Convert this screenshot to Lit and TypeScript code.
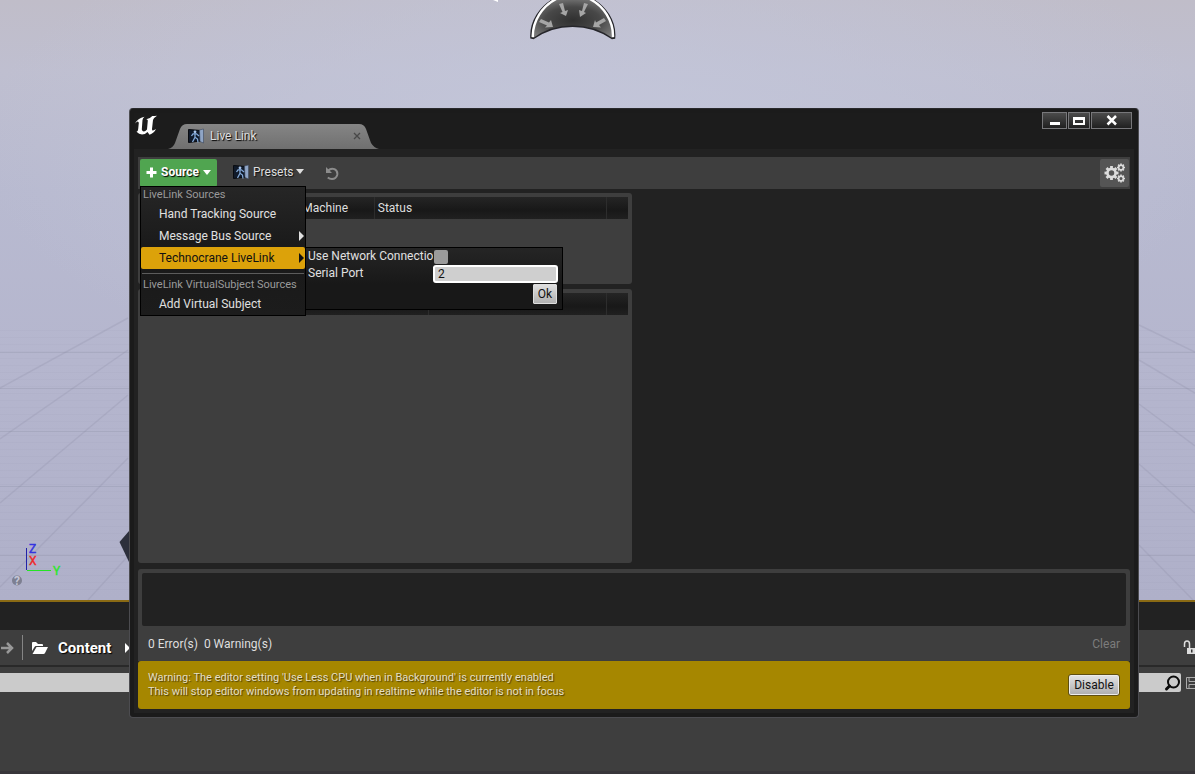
import { LitElement, html, css, svg } from "lit";
import { customElement, property } from "lit/decorators.js";

const captureIcon = html`<svg width="16" height="16" viewBox="0 0 16 16" aria-hidden="true">
  <path d="M.5 1.500 13 2.500V13L.5 14.500z" fill="#101a2a" stroke="#080b10" />
  <path d="M11.500 2 15.500 1v14L12 13.500z" fill="#8fa5c6" stroke="#3c485c" stroke-width=".6" />
  <circle cx="7" cy="3.800" r="1.400" fill="#a9c6ec" />
  <path d="M7 5v4.500M3.500 8 5 5.800 8.500 5.800 11 8M7 9.200 4.500 14M7 9.200 9.500 11 10 14.500" fill="none" stroke="#83a9d8" stroke-width="1.300" />
</svg>`;

@customElement("scene-viewport")
class SceneViewport extends LitElement {
  static styles = css`
    :host {
      display: block;
      position: relative;
      overflow: hidden;
      background:
        radial-gradient(ellipse 620px 260px at 50% 24%, #c3c6da 0, #c3c6da00 100%),
        linear-gradient(#c0bdc9 0, #bfbfd0 12%, #b8bad0 32%, #b5b6ce 60%, #afb0c9 100%);
    }
    .grid { position: absolute; inset: 0; width: 100%; height: 100%; }
    .sun { position: absolute; left: 529px; top: 0; }
    .axes { position: absolute; left: 8px; bottom: 10px; font: 12px Roboto, sans-serif; }
  `;

  render() {
    const rows = [352, 388, 431, 486, 555];
    const fine = Array.from({ length: 38 }, (_, i) => 330 + i * 7);
    const rays = [
      [0, 439, 128, 350], [0, 503, 128, 395], [0, 587, 128, 458], [88, 600, 128, 556], [0, 388, 128, 318],
      [1139, 360, 1195, 393], [1139, 404, 1195, 446], [1139, 464, 1195, 513], [1139, 545, 1193, 600], [1139, 325, 1195, 352],
    ];
    return html`
      <svg class="grid" viewBox="0 0 1195 600" preserveAspectRatio="none" aria-hidden="true">
        ${fine.map((y) => svg`<path d="M0 ${y}.5H1195" stroke="#8e91a5" stroke-opacity=".07" />`)}
        ${rows.map((y) => svg`<path d="M0 ${y}.5H1195" stroke="#85889c" stroke-opacity=".25" />`)}
        ${rays.map(([a, b, c, d]) => svg`<path d="M${a} ${b}L${c} ${d}" stroke="#80839a" stroke-width="1.500" stroke-opacity=".2" />`)}
        <path d="M493 0h5v2z" fill="#fff" />
        <path d="M129 531 119.500 542 129 562z" fill="#2c2f3b" />
      </svg>
      <svg class="sun" width="88" height="42" viewBox="0 0 88 42" aria-hidden="true">
        <defs><radialGradient id="dome" cx=".5" cy=".55" r=".6"><stop offset="0" stop-color="#303030" /><stop offset=".55" stop-color="#484848" /><stop offset="1" stop-color="#808080" /></radialGradient></defs>
        <path d="M2 38C1 22 11 6 27-2H61C77 6 87 22 85.500 38L83 38.500C60 22 27 22 4.500 38.500Z" fill="url(#dome)" stroke="#26262b" stroke-width="1.500" />
        <path d="M3.800 37C3.500 21 13 6 28-1.500M84 37C84.500 21 75 6 60-1.500" fill="none" stroke="#fff" stroke-width="2.400" />
        <g fill="#a5a5a5">
          <path d="M30 4 34 3 36 11 39 10 37 16 31 13 33.500 12z" />
          <path d="M59 4 55 3 53 11 50 10 51 17 57 13 55 12z" />
          <path d="M12 19 20 22.500 22 20 24 27 16 27.500 18 25.500 10 22z" />
          <path d="M75 18 67 22.500 66 20 64 27 72 27.500 70 25 77 21z" />
        </g>
      </svg>
      <svg class="axes" width="60" height="52" viewBox="0 0 60 52" aria-hidden="true">
        <path d="M18.500 10V32" stroke="#2222a8" />
        <path d="M19 32.500H43" stroke="#25e325" />
        <text x="21" y="15" fill="#3434e0" stroke="#3434e0" stroke-width=".4">Z</text>
        <text x="21" y="27" fill="#ee2828" stroke="#ee2828" stroke-width=".4">X</text>
        <text x="45" y="37" fill="#2be62b" stroke="#2be62b" stroke-width=".4">Y</text>
        <circle cx="9" cy="42.500" r="5" fill="#7d7f91" />
        <text x="6" y="47" fill="#c4c5d5" font-weight="700">?</text>
      </svg>
    `;
  }
}

@customElement("content-browser")
class ContentBrowser extends LitElement {
  static styles = css`
    :host {
      display: block;
      background: #3e3e3e;
      border-top: 2px solid #8a6a14;
      box-shadow: inset 0 -3px #38363a;
      min-height: 172px;
      color: #fff;
      font: 700 15px/20px Roboto, sans-serif;
    }
    .strip { height: 28px; background: #222; }
    .path { display: flex; align-items: center; height: 35px; border-bottom: 2px solid #292929; }
    .history { width: 23px; height: 25px; padding: 0; border: 0; border-right: 1px solid #858585; background: none; text-align: left; }
    .history svg { display: block; }
    .crumb { display: flex; align-items: center; gap: 10px; margin-left: 8px; color: #fff; text-decoration: none; text-shadow: 1px 1px 1px #000; }
    .next { margin-left: 14px; }
    .lock { margin-left: auto; }
    .filter { display: flex; align-items: center; margin-top: 6px; }
    .box { position: relative; display: flex; flex: 1; align-items: center; height: 19px; background: #cbcbcb; border-radius: 0 2px 2px 0; }
    .box input { flex: 1; min-width: 0; height: 19px; box-sizing: border-box; border: 0; padding: 0 4px; background: none; font: inherit; outline: 0; }
    .save { margin-left: 5px; width: 9px; overflow: hidden; }
  `;

  render() {
    return html`
      <div class="strip"></div>
      <div class="path">
        <button class="history" aria-label="Forward"><svg width="14" height="25" viewBox="0 0 14 25"><path d="M1 13h9M7 8l5 5-5 5" fill="none" stroke="#999" stroke-width="2.500" /></svg></button>
        <a class="crumb" href="#content">
          <svg width="17" height="14" viewBox="0 0 17 14" aria-hidden="true"><path d="M1 9V2Q1 1 2 1H5L7 3H11Q12 3 12 4V5H5Q4 5 3.500 6L1 10ZM5.500 6H17L14 12Q13.500 13 12.500 13H1.500Z" fill="#fff" /></svg>
          Content
        </a>
        <svg class="next" width="5" height="10" viewBox="0 0 5 10" aria-hidden="true"><path d="M0 0 5 5 0 10z" fill="#fff" /></svg>
        <svg class="lock" width="12" height="16" viewBox="0 0 12 16" aria-hidden="true"><path d="M1.500 7V4Q1.500 1 4 1T6.500 4V8" fill="none" stroke="#ddd" stroke-width="1.500" /><path d="M4 8H12V14H4z" fill="#ddd" /><path d="M8 9.500h1.500V12.500H8z" fill="#333" /></svg>
      </div>
      <div class="filter">
        <div class="box">
          <input type="text" aria-label="Search assets" />
          <svg width="17" height="18" viewBox="0 0 17 18" aria-hidden="true"><circle cx="9.500" cy="8" r="5.500" fill="none" stroke="#0b0b0b" stroke-width="2" /><path d="M5.500 12 2.500 15" stroke="#0b0b0b" stroke-width="3" stroke-linecap="round" /></svg>
        </div>
        <svg class="save" width="9" height="12" viewBox="0 0 9 12" aria-hidden="true"><path d="M.5.5H11.500V11.500H.5ZM3 1V4.500H9M3 11V7.500H9" fill="none" stroke="#aaa" /></svg>
      </div>
    `;
  }
}

@customElement("source-form")
class SourceForm extends LitElement {
  static styles = css`
    form {
      display: grid;
      grid-template-columns: 125px 125px;
      grid-template-rows: 17px 19px 20px;
      padding: 0 4px 5px 2px;
      border: 1px solid #000;
      background: linear-gradient(#252525, #181818 60%);
      color: #e0e0e0;
      font: 12px/16px Roboto, sans-serif;
    }
    label { overflow: hidden; white-space: nowrap; }
    .check { appearance: none; width: 14px; height: 14px; margin: 2px 1px 0; border-radius: 2px; background: #9b9b9b; }
    .port { box-sizing: border-box; width: 125px; height: 18px; margin: 0; padding: 0 3px; border: 2px solid #fff; border-radius: 3px; background: #cfcfcf; color: #111; font: inherit; outline: 0; }
    .ok { grid-column: 2; justify-self: end; box-sizing: border-box; width: 24px; height: 20px; margin: 0 1px; padding: 0; border: 1px solid #ddd; border-radius: 1px; background: linear-gradient(#dedede, #b0b0b0); color: #111; font: inherit; }
  `;

  render() {
    return html`<form @submit=${(e: Event) => e.preventDefault()}>
      <label for="network">Use Network Connection</label><input class="check" id="network" type="checkbox" />
      <label for="port">Serial Port</label><input class="port" id="port" type="text" value="2" />
      <button class="ok">Ok</button>
    </form>`;
  }
}

@customElement("source-menu")
class SourceMenu extends LitElement {
  static styles = css`
    .menu {
      box-sizing: border-box;
      width: 166px;
      border: 1px solid #000;
      background: linear-gradient(#262626, #191919 50%, #1c1c1c);
      color: #e0e0e0;
      font: 12px/22px Roboto, sans-serif;
    }
    .heading { height: 16px; padding-left: 2px; color: #9a9a9a; font-size: 11px; line-height: 16px; white-space: nowrap; }
    .item { display: flex; align-items: center; justify-content: space-between; width: 100%; height: 22px; padding: 0 1px 0 18px; border: 0; border-radius: 2px; background: none; color: inherit; font: inherit; text-align: left; }
    .active { background: #dca20a; color: #111; }
    .row { position: relative; }
    .rule { height: 1px; margin: 4px 1px 3px; border: 0; background: #5c5c5c; }
    source-form { position: absolute; left: 100%; top: 0; }
  `;

  item(label: string, sub = false, active = false) {
    return html`<button role="menuitem" class="item ${active ? "active" : ""}">
      ${label}${sub ? html`<svg width="5" height="10" viewBox="0 0 5 10" aria-hidden="true"><path d="M0 0 5 5 0 10z" fill="currentColor" /></svg>` : ""}
    </button>`;
  }

  render() {
    return html`<div class="menu" role="menu">
      <div class="heading">LiveLink Sources</div>
      ${this.item("Hand Tracking Source")} ${this.item("Message Bus Source", true)}
      <div class="row">${this.item("Technocrane LiveLink", true, true)}<source-form></source-form></div>
      <hr class="rule" />
      <div class="heading">LiveLink VirtualSubject Sources</div>
      ${this.item("Add Virtual Subject")}
    </div>`;
  }
}

@customElement("data-panel")
class DataPanel extends LitElement {
  @property({ attribute: false }) columns: { title: string; width: number }[] = [];

  static styles = css`
    :host { display: block; box-sizing: border-box; padding: 4px; border-radius: 3px; background: #3e3e3e; color: #dedede; font: 12px/22px Roboto, sans-serif; overflow: hidden; }
    table { width: 100%; border-collapse: collapse; table-layout: fixed; background: linear-gradient(#252525, #181818 60%, #202020); }
    th { height: 22px; padding: 0 3px; border-right: 1px solid #2d2d2d; font-weight: 400; text-align: left; white-space: nowrap; }
    th:last-child { border-right: 0; }
  `;

  render() {
    return html`<table>
      <colgroup>${this.columns.map((c) => html`<col style="width:${c.width}%" />`)}</colgroup>
      <thead><tr>${this.columns.map((c) => html`<th scope="col">${c.title}</th>`)}</tr></thead>
    </table>`;
  }
}

@customElement("live-link-window")
class LiveLinkWindow extends LitElement {
  static styles = css`
    :host {
      box-sizing: border-box;
      display: flex;
      flex-direction: column;
      padding: 0 8px 8px;
      border: 1px solid #4c4c50;
      border-top-color: #29292c;
      border-radius: 4px;
      background: linear-gradient(#1c1c1c, #1c1c1c 40px, #222 40px);
      box-shadow: inset 0 0 0 4px #1b1b1b;
      color: #dedede;
      font: 12px/16px Roboto, sans-serif;
    }
    button { font: inherit; color: inherit; }
    .title { display: flex; align-items: flex-start; height: 40px; margin: 0 -3px 8px; }
    .logo { margin-top: 6px; }
    .tab { position: relative; box-sizing: border-box; display: flex; align-items: center; width: 211px; height: 25px; margin: 15px 0 0 9px; padding-bottom: 2px; isolation: isolate; text-shadow: 1px 1px 1px #000; }
    .shape { position: absolute; inset: 0; z-index: -1; }
    .tab-icon { display: flex; margin: 0 6px 0 20px; }
    .tab-name { flex: 1; }
    .tab-close { width: 12px; height: 12px; margin-right: 16px; padding: 0; border: 0; background: none; }
    .tab-close svg, .controls svg { display: block; margin: auto; }
    .controls { display: flex; gap: 1px; margin: 3px 1px 0 auto; }
    .controls button { box-sizing: border-box; height: 17px; width: 25px; padding: 0; border: 1px solid #77777a; background: linear-gradient(#4b4b4b, #202020); }
    .controls .maximise { width: 22px; }
    .controls .close { width: 41px; }
    .toolbar { display: flex; align-items: center; height: 32px; margin-bottom: 4px; padding: 0 1px 0 2px; background: #3e3e3e; }
    .anchor { position: relative; align-self: flex-end; z-index: 2; }
    .source { display: flex; align-items: center; gap: 4px; width: 77px; height: 28px; margin-bottom: 2px; padding: 0 6px 2px; border: 0; border-radius: 2px; background: #50a550; color: #fff; font-weight: 700; text-shadow: 1px 1px 1px #000; }
    source-menu { position: absolute; left: 0; top: 27px; }
    .flat { display: flex; align-items: center; padding: 0; border: 0; background: none; }
    .presets { gap: 2px; margin-left: 16px; padding-bottom: 3px; text-shadow: 1px 1px 1px #111; }
    .presets span { margin-left: 2px; }
    .undo { margin-left: 21px; }
    .options { display: grid; place-items: center; width: 29px; height: 28px; margin-left: auto; padding: 0; border: 0; border-radius: 2px; background: #555; }
    .body { display: grid; grid-template-columns: 1fr 1fr; gap: 4px; flex: 1; min-height: 0; }
    .lists { display: grid; grid-template-rows: minmax(0, 1fr) minmax(0, 3fr); gap: 5px; }
    .log { margin-top: 6px; padding: 4px 4px 0; border-radius: 3px 3px 0 0; background: #3e3e3e; }
    .output { height: 53px; border-radius: 2px; background: #222; }
    .status { display: flex; align-items: center; height: 35px; padding: 0 6px; }
    .clear { margin-left: auto; color: #7c7c7c; }
    .warning { display: flex; align-items: center; justify-content: space-between; height: 48px; padding: 0 10px; border-radius: 3px; background: #a68700; color: #e6dfc4; font-size: 11px; line-height: 14px; text-shadow: 1px 1px 1px #4c3f08; }
    .warning p { margin: 0; }
    .disable { box-sizing: border-box; width: 52px; height: 22px; padding: 0; border: 1px solid #5f4e10; border-radius: 3px; background: linear-gradient(#e4e4e4, #adadad); box-shadow: inset 0 0 0 1px #ececec; color: #111; font-size: 12px; text-shadow: none; }
  `;

  gear(cx: number, cy: number, r: number) {
    const teeth = Array.from({ length: 8 }, (_, i) => i * 45);
    return svg`<g transform="translate(${cx} ${cy})">
      ${teeth.map((a) => svg`<rect x=${-r * 0.2} y=${-r} width=${r * 0.4} height=${r * 0.5} transform="rotate(${a})" fill="#dcdcdc" />`)}
      <circle r=${r * 0.58} fill="none" stroke="#dcdcdc" stroke-width=${r * 0.38} />
    </g>`;
  }

  render() {
    const caret = html`<svg width="8" height="5" viewBox="0 0 8 5" aria-hidden="true"><path d="M0 0H8L4 5z" fill="currentColor" /></svg>`;
    return html`
      <header class="title">
        <svg class="logo" width="24" height="22" viewBox="0 0 24 22" aria-hidden="true">
          <path d="M0 8.500Q2.500 3.500 9.500 1.800 7.800 3 7.500 5L6.800 14.500Q7.300 16.500 8.800 16.500 10.300 16.300 12 14.500L12.800 5.500Q12.800 4.500 11.300 4.200 15.300 3.500 17.300 1 19.300 1 22 .8 18.500 3 18 5L17 14Q17 15.700 18 15.500 19 15.300 21 14 19 18.200 14.500 19.800L12.500 17Q10 19.500 7 19.500 4 19.300 1.500 16.800 3 16.500 3.200 14L3.800 8Q3.800 6.500 2.500 6.500 1.500 6.800 0 8.500Z" fill="#fff" />
        </svg>
        <div class="tab">
          <svg class="shape" width="211" height="25" viewBox="0 0 211 25" aria-hidden="true">
            <defs><linearGradient id="face" x2="0" y2="1"><stop offset="0" stop-color="#858585" /><stop offset="1" stop-color="#707070" /></linearGradient></defs>
            <path d="M0 25Q5 24 7 19L12 5Q14 0 19 0H191Q196 0 198 5L203 19Q206 24 211 25Z" fill="url(#face)" />
          </svg>
          <span class="tab-icon">${captureIcon}</span>
          <span class="tab-name">Live Link</span>
          <button class="tab-close" aria-label="Close tab"><svg width="8" height="8" viewBox="0 0 8 8"><path d="M1 1 7 7M7 1 1 7" stroke="#484848" stroke-width="1.300" /></svg></button>
        </div>
        <div class="controls">
          <button aria-label="Minimise"><svg width="12" height="12" viewBox="0 0 12 12"><path d="M1 7H11V10H1z" fill="#fff" /></svg></button>
          <button class="maximise" aria-label="Maximise"><svg width="12" height="10" viewBox="0 0 12 10"><path d="M0 1H12V9H0ZM2 4V7H10V4Z" fill="#fff" fill-rule="evenodd" /></svg></button>
          <button class="close" aria-label="Close"><svg width="12" height="11" viewBox="0 0 12 11"><path d="M1.500 1 10 9.500M10 1 1.500 9.500" stroke="#fff" stroke-width="2.500" /></svg></button>
        </div>
      </header>
      <div class="toolbar">
        <div class="anchor">
          <button class="source">
            <svg width="11" height="11" viewBox="0 0 11 11" aria-hidden="true"><path d="M4 0.500H7V4H10.500V7H7V10.500H4V7H.5V4H4z" fill="#fff" /></svg>
            Source ${caret}
          </button>
          <source-menu></source-menu>
        </div>
        <button class="flat presets">${captureIcon}<span>Presets</span>${caret}</button>
        <button class="flat undo" aria-label="Undo"><svg width="14" height="15" viewBox="0 0 14 15"><path d="M3 4.800Q6 1.700 9.500 3.200 13 5 12.200 9 11 13 7 13 4.500 13 2.800 11.500" fill="none" stroke="#8c8c8c" stroke-width="2" /><path d="M1 1V7H7z" fill="#8c8c8c" /></svg></button>
        <button class="options" aria-label="Options"><svg width="22" height="22" viewBox="0 0 22 22">${this.gear(7.5, 11, 7)}${this.gear(17, 5.5, 4)}${this.gear(17, 16.500, 4)}</svg></button>
      </div>
      <div class="body">
        <div class="lists">
          <data-panel .columns=${[{ title: "", width: 24 }, { title: "Source Machine", width: 23.8 }, { title: "Status", width: 47.7 }, { title: "", width: 4.5 }]}></data-panel>
          <data-panel .columns=${[{ title: "", width: 59 }, { title: "", width: 36.5 }, { title: "", width: 4.5 }]}></data-panel>
        </div>
      </div>
      <section class="log">
        <div class="output" role="log"></div>
        <div class="status"><span>0 Error(s)&nbsp; 0 Warning(s)</span><button class="flat clear">Clear</button></div>
      </section>
      <div class="warning">
        <p>Warning: The editor setting 'Use Less CPU when in Background' is currently enabled<br />This will stop editor windows from updating in realtime while the editor is not in focus</p>
        <button class="disable">Disable</button>
      </div>
    `;
  }
}

@customElement("app-root")
class AppRoot extends LitElement {
  static styles = css`
    :host { display: flex; flex-direction: column; position: relative; height: 100vh; overflow: hidden; }
    scene-viewport { flex: 1; }
    live-link-window { position: absolute; inset: 108px 56px 56px 129px; }
  `;

  render() {
    return html`
      <scene-viewport></scene-viewport>
      <content-browser></content-browser>
      <live-link-window></live-link-window>
    `;
  }
}
